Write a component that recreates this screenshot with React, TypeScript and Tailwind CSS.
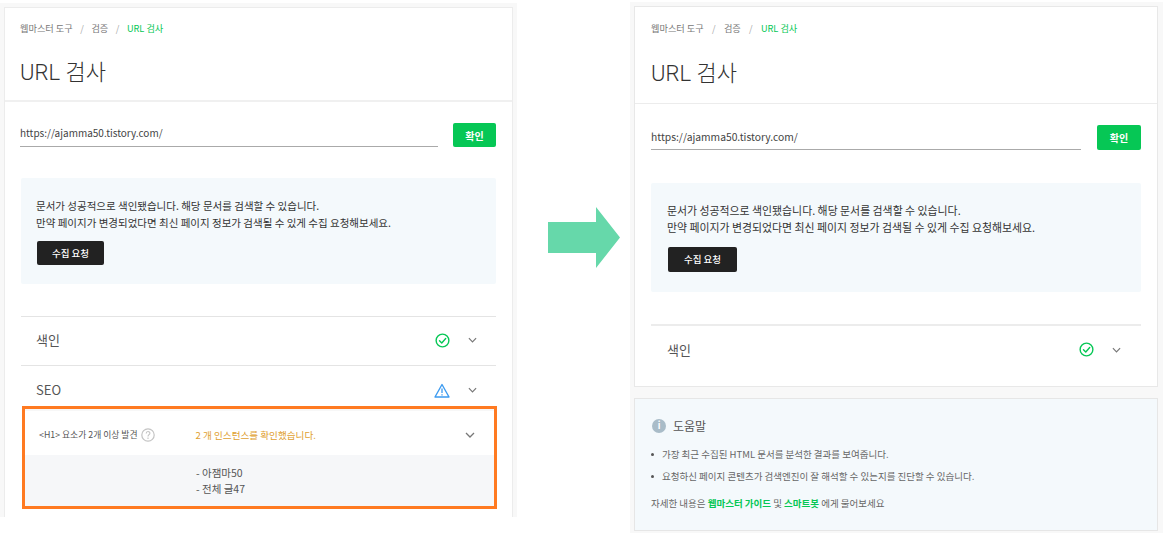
const font = { fontFamily: '"Noto Sans CJK KR", "Noto Sans", sans-serif' };

function Check({ size = 15 }: { size?: number }) {
  return (
    <svg width={size} height={size} viewBox="0 0 16 16" fill="none" stroke="#06c755" strokeWidth="1.5" className="shrink-0">
      <circle cx="8" cy="8" r="6.8" />
      <path d="M4.8 8.2 7.2 10.6 11.4 5.8" strokeLinecap="round" strokeLinejoin="round" />
    </svg>
  );
}

function Warn() {
  return (
    <svg width="16" height="15" viewBox="0 0 16 15" fill="none" className="shrink-0">
      <path d="M8 1.5 15 14H1Z" stroke="#3d9bf0" strokeWidth="1.4" strokeLinejoin="round" />
      <path d="M8 5.5V10M8 11.2v1.2" stroke="#3d9bf0" strokeWidth="1.3" />
    </svg>
  );
}

function Chevron({ w = 9 }: { w?: number }) {
  return (
    <svg width={w} height="6" viewBox="0 0 10 6" fill="none" stroke="#777" strokeWidth="1.3" className="shrink-0">
      <path d="M1 1 5 5 9 1" />
    </svg>
  );
}

function Crumbs({ wide = false }: { wide?: boolean }) {
  const sep = wide ? "mx-[8.25px] text-[#aaa]" : "mx-[7.5px] text-[#aaa]";
  return (
    <div className="flex items-center text-[9.2px] leading-[14px] text-[#777]">
      <span>웹마스터 도구</span>
      <span className={sep}>/</span>
      <span>검증</span>
      <span className={sep}>/</span>
      <span className="text-[#06c755]">URL 검사</span>
    </div>
  );
}

function Left() {
  return (
    <div className="w-[517px] h-[514px] mt-[3px] bg-[#f8f8f8] pl-[4px] pr-[4px] pt-[4px] shrink-0">
      <div className="h-[510px] bg-white border border-[#ececec] border-b-0">
        <div className="h-[94px] border-b-2 border-[#f0f0f0] pl-[15px] pt-[13px]">
          <Crumbs />
          <h1 className="mt-[21px] text-[22px] leading-[34px] font-light text-[#333] font-['Roboto','Noto_Sans_CJK_KR',sans-serif]">URL 검사</h1>
        </div>
        <div className="pl-[15px] pr-[15px]">
          <div className="flex items-end mt-[21px]">
            <div className="w-[418px] h-[24px] border-b border-[#aaa] text-[10px] leading-[20px] text-[#444]">https://ajamma50.tistory.com/</div>
            <div className="ml-[15px] w-[43px] h-[24px] rounded-[2px] bg-[#06c755] text-white text-[10px] font-bold flex items-center justify-center">확인</div>
          </div>
          <div className="mt-[31px] ml-[1px] h-[106px] w-[475px] rounded-[2px] bg-[#f4f9fc] pl-[15px] pt-[19px] text-[#333]">
            <p className="text-[10.5px] leading-[17px]">문서가 성공적으로 색인됐습니다. 해당 문서를 검색할 수 있습니다.</p>
            <p className="text-[10.5px] leading-[17px]">만약 페이지가 변경되었다면 최신 페이지 정보가 검색될 수 있게 수집 요청해보세요.</p>
            <div className="mt-[10px] ml-[1px] w-[67px] h-[24px] rounded-[2px] bg-[#222] text-white text-[9.5px] font-medium flex items-center justify-center">수집 요청</div>
          </div>
          <div className="mt-[32px] ml-[1px] w-[475px] border-t border-[#e4e4e4] h-[49px] flex items-center pl-[15px] pr-[19px] pb-[2px]">
            <span className="text-[13px] text-[#555] grow">색인</span>
            <Check />
            <span className="ml-[18px] flex"><Chevron /></span>
          </div>
          <div className="ml-[1px] w-[475px] border-t border-[#e4e4e4] h-[41px] flex items-center pl-[15px] pr-[19px] pt-[8px]">
            <span className="text-[13px] text-[#555] grow">SEO</span>
            <Warn />
            <span className="ml-[18px] flex"><Chevron /></span>
          </div>
          <div className="w-[475px] ml-[2px] h-[103px] border-[3px] border-[#ff7a21] bg-white">
            <div className="h-[46px] border-t-2 border-[#f7f7f7] flex items-center pl-[14px] pr-[19px] pt-[4px]">
              <span className="text-[8.8px] text-[#555]">&lt;H1&gt; 요소가 2개 이상 발견</span>
              <svg width="14" height="14" viewBox="0 0 14 14" className="ml-[3px] shrink-0" fill="none">
                <circle cx="7" cy="7" r="6.2" stroke="#c4c4c4" strokeWidth="1.2" />
                <path d="M5.2 5.4c0-2.4 3.7-2.4 3.7-.2 0 1.5-1.9 1.5-1.9 3.2M7 9.6v1.3" stroke="#c4c4c4" strokeWidth="1.1" />
              </svg>
              <span className="ml-[41px] text-[9.6px] text-[#e0a030] grow">2 개 인스턴스를 확인했습니다.</span>
              <Chevron w={10} />
            </div>
            <div className="h-[51px] bg-[#f6f7f9] pl-[171px] pt-[10px] text-[10.5px] leading-[16px] text-[#555]">
              <p>- 아잼마50</p>
              <p>- 전체 글47</p>
            </div>
          </div>
        </div>
      </div>
    </div>
  );
}

function Arrow() {
  return (
    <div className="w-[113px] shrink-0 pl-[31px] pt-[207px]">
      <svg width="72" height="61" viewBox="0 0 72 61">
        <path d="M0 15H48V0L72 30.5 48 61V46H0Z" fill="#66d8aa" />
      </svg>
    </div>
  );
}

function Right() {
  return (
    <div className="w-[533px] h-[531px] mt-[2px] bg-[#f8f8f8] pl-[4px] pr-[5px] pt-[4px] shrink-0">
      <div className="h-[381px] bg-white border border-[#e8e8e8]">
        <div className="h-[97px] border-b border-[#ececec] pl-[16px] pt-[14px]">
          <Crumbs wide />
          <h1 className="mt-[22px] text-[22px] leading-[34px] font-light text-[#333] font-['Roboto','Noto_Sans_CJK_KR',sans-serif]">URL 검사</h1>
        </div>
        <div className="px-[16px]">
          <div className="flex items-end mt-[21px]">
            <div className="w-[430px] h-[25px] border-b border-[#aaa] text-[10.3px] leading-[24px] text-[#444]">https://ajamma50.tistory.com/</div>
            <div className="ml-[16px] w-[44px] h-[25px] rounded-[2px] bg-[#06c755] text-white text-[10px] font-bold flex items-center justify-center">확인</div>
          </div>
          <div className="mt-[33px] h-[109px] rounded-[2px] bg-[#f4f9fc] pl-[16px] pt-[19px] text-[#333]">
            <p className="text-[10.9px] leading-[17px]">문서가 성공적으로 색인됐습니다. 해당 문서를 검색할 수 있습니다.</p>
            <p className="text-[10.9px] leading-[17px]">만약 페이지가 변경되었다면 최신 페이지 정보가 검색될 수 있게 수집 요청해보세요.</p>
            <div className="mt-[11px] ml-[1px] w-[69px] h-[25px] rounded-[2px] bg-[#222] text-white text-[9.5px] font-medium flex items-center justify-center">수집 요청</div>
          </div>
          <div className="mt-[32px] border-t-2 border-[#ececec] h-[49px] flex items-center pl-[16px] pr-[20px]">
            <span className="text-[13px] text-[#555] grow">색인</span>
            <Check />
            <span className="ml-[18px] flex"><Chevron /></span>
          </div>
        </div>
      </div>
      <div className="mt-[11px] h-[133px] bg-[#f4f9fc] border border-[#e6e6e6] pl-[16px] pt-[17px]">
        <div className="flex items-center h-[20px] pl-[1px]">
          <span className="w-[14px] h-[14px] rounded-full bg-[#a9bcc8] text-white text-[9px] font-bold leading-[14px] text-center">i</span>
          <span className="ml-[7px] text-[12px] text-[#555]">도움말</span>
        </div>
        <ul className="mt-[11px] text-[9.5px] text-[#666] leading-[14px]">
          <li className="flex items-center"><span className="w-[3px] h-[3px] rounded-full bg-[#555] mr-[8px]" />가장 최근 수집된 HTML 문서를 분석한 결과를 보여줍니다.</li>
          <li className="flex items-center mt-[8px]"><span className="w-[3px] h-[3px] rounded-full bg-[#555] mr-[8px]" />요청하신 페이지 콘텐츠가 검색엔진이 잘 해석할 수 있는지를 진단할 수 있습니다.</li>
        </ul>
        <p className="mt-[13px] text-[9.5px] leading-[14px] text-[#666]">자세한 내용은 <span className="text-[#06c755] font-bold">웹마스터 가이드</span> 및 <span className="text-[#06c755] font-bold">스마트봇</span> 에게 물어보세요</p>
      </div>
    </div>
  );
}

export default function App() {
  return (
    <div className="w-[1163px] h-[536px] bg-white flex overflow-hidden" style={font}>
      <Left />
      <Arrow />
      <Right />
    </div>
  );
}
